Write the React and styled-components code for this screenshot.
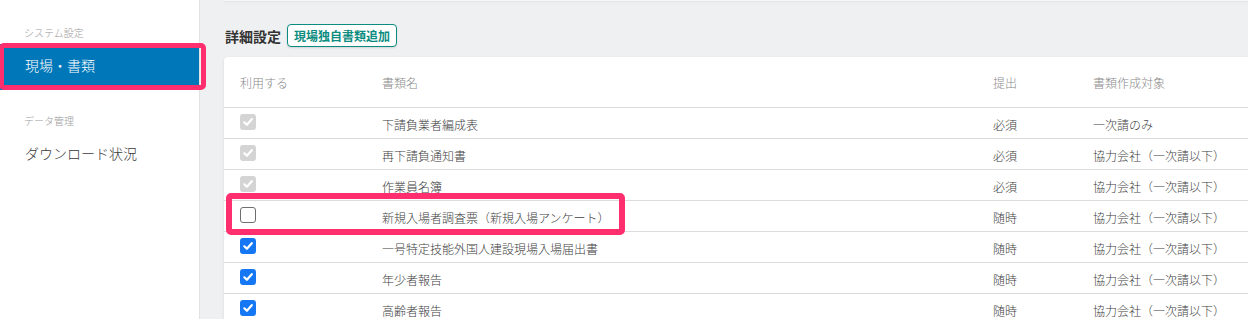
import React from 'react';
import styled, { createGlobalStyle } from 'styled-components';

const rows = [
  { name: '下請負業者編成表', submit: '必須', target: '一次請のみ', state: 'locked' },
  { name: '再下請負通知書', submit: '必須', target: '協力会社（一次請以下）', state: 'locked' },
  { name: '作業員名簿', submit: '必須', target: '協力会社（一次請以下）', state: 'locked' },
  { name: '新規入場者調査票（新規入場アンケート）', submit: '随時', target: '協力会社（一次請以下）', state: 'off', marked: true },
  { name: '一号特定技能外国人建設現場入場届出書', submit: '随時', target: '協力会社（一次請以下）', state: 'on' },
  { name: '年少者報告', submit: '随時', target: '協力会社（一次請以下）', state: 'on' },
  { name: '高齢者報告', submit: '随時', target: '協力会社（一次請以下）', state: 'on' },
];

const CheckMark = () => (
  <svg width="12" height="12" viewBox="0 0 12 12">
    <path d="M2.3 6.3 L4.9 8.8 L9.8 3.2" fill="none" stroke="#fff" strokeWidth="2.2" strokeLinecap="round" strokeLinejoin="round" />
  </svg>
);

const App = () => {
  return (
    <>
      <GlobalStyle />
      <Layout>
        <Sidebar>
          <SectionLabel>システム設定</SectionLabel>
          <NavItem $active>
            現場・書類
            <Mark $sidebar />
          </NavItem>
          <SectionLabel $spaced>データ管理</SectionLabel>
          <NavItem>ダウンロード状況</NavItem>
        </Sidebar>
        <Main>
          <TopCard />
          <TitleRow>
            <Title>詳細設定</Title>
            <AddButton>現場独自書類追加</AddButton>
          </TitleRow>
          <Card>
            <HeadRow>
              <span>利用する</span>
              <span>書類名</span>
              <span>提出</span>
              <span>書類作成対象</span>
            </HeadRow>
            {rows.map((row) => (
              <Row key={row.name}>
                <Box $state={row.state}>{row.state !== 'off' && <CheckMark />}</Box>
                <Cell>{row.name}</Cell>
                <Cell>{row.submit}</Cell>
                <Cell>{row.target}</Cell>
                {row.marked && <Mark />}
              </Row>
            ))}
          </Card>
        </Main>
      </Layout>
    </>
  );
};

export default App;

const GlobalStyle = createGlobalStyle`
  body {
    margin: 0;
    background: #eff0f2;
    font-family: 'Noto Sans CJK JP', 'Noto Sans', sans-serif;
    font-weight: 300;
    overflow: hidden;
  }
`;

const Layout = styled.div`
  display: flex;
  width: 1248px;
  height: 319px;
  overflow: hidden;
`;

const Sidebar = styled.aside`
  width: 199px;
  flex-shrink: 0;
  background: #ffffff;
  border-right: 1px solid #e1e2e4;
  padding-top: 26px;
  box-sizing: content-box;
  position: relative;
  z-index: 2;
`;

const SectionLabel = styled.div`
  font-size: 10px;
  line-height: 14px;
  color: #9a9a9a;
  padding-left: 24px;
  margin-top: ${(p) => (p.$spaced ? '24px' : '0')};
  margin-bottom: 4px;
`;

const NavItem = styled.div`
  position: relative;
  height: 46px;
  box-sizing: border-box;
  display: flex;
  align-items: center;
  padding: 0 0 4px 25px;
  font-size: 14px;
  color: ${(p) => (p.$active ? '#ffffff' : '#3a3a3a')};
  background: ${(p) => (p.$active ? '#0077b8' : 'transparent')};
`;

const Mark = styled.div`
  position: absolute;
  box-sizing: border-box;
  border: ${(p) => (p.$sidebar ? '5px' : '6px')} solid #ff2f6f;
  border-radius: 5px;
  pointer-events: none;
  left: ${(p) => (p.$sidebar ? '-1px' : '2px')};
  top: ${(p) => (p.$sidebar ? '-1px' : '-8px')};
  width: ${(p) => (p.$sidebar ? '207px' : '399px')};
  height: ${(p) => (p.$sidebar ? '47px' : '42px')};
`;

const Main = styled.main`
  flex: 1;
  padding-left: 24px;
  min-width: 0;
`;

const TopCard = styled.div`
  height: 1px;
  background: #f7f7f8;
  box-shadow: 0 1px 2px rgba(0, 0, 0, 0.08);
  margin: 0 -24px 23px 0;
`;

const TitleRow = styled.div`
  display: flex;
  align-items: center;
  gap: 6px;
  height: 23px;
  margin-bottom: 10px;
`;

const Title = styled.h2`
  margin: 0;
  font-size: 14px;
  font-weight: 700;
  color: #333333;
  padding-left: 1px;
`;

const AddButton = styled.button`
  height: 23px;
  width: 110px;
  padding: 0;
  border: 1px solid #0c8c80;
  border-radius: 4px;
  background: #ffffff;
  color: #0c8c80;
  font-family: inherit;
  font-size: 12px;
  font-weight: 700;
  box-shadow: 0 1px 2px rgba(0, 0, 0, 0.12);
`;

const Card = styled.section`
  background: #ffffff;
  border-radius: 4px;
  box-shadow: 0 1px 3px rgba(0, 0, 0, 0.1);
  margin-right: -24px;
`;

const HeadRow = styled.div`
  display: grid;
  grid-template-columns: 142px 611px 100px 1fr;
  align-items: center;
  height: 50px;
  padding-left: 16px;
  border-bottom: 1px solid #dcdcdc;
  font-size: 12px;
  color: #8a8a8a;
`;

const Row = styled.div`
  position: relative;
  display: grid;
  grid-template-columns: 142px 611px 100px 1fr;
  align-items: center;
  height: 30px;
  padding-left: 16px;
  border-bottom: 1px solid #dcdcdc;
  font-size: 12px;
  color: #404040;
`;

const Cell = styled.span`
  padding-top: 3px;
`;

const Box = styled.span`
  width: 16px;
  height: 16px;
  box-sizing: border-box;
  border-radius: 3px;
  display: flex;
  align-items: center;
  justify-content: center;
  margin-top: -2px;
  background: ${(p) => (p.$state === 'on' ? '#1677f4' : p.$state === 'locked' ? '#d4d4d4' : '#ffffff')};
  border: ${(p) => (p.$state === 'off' ? '1px solid #6f6f6f' : 'none')};
`;
